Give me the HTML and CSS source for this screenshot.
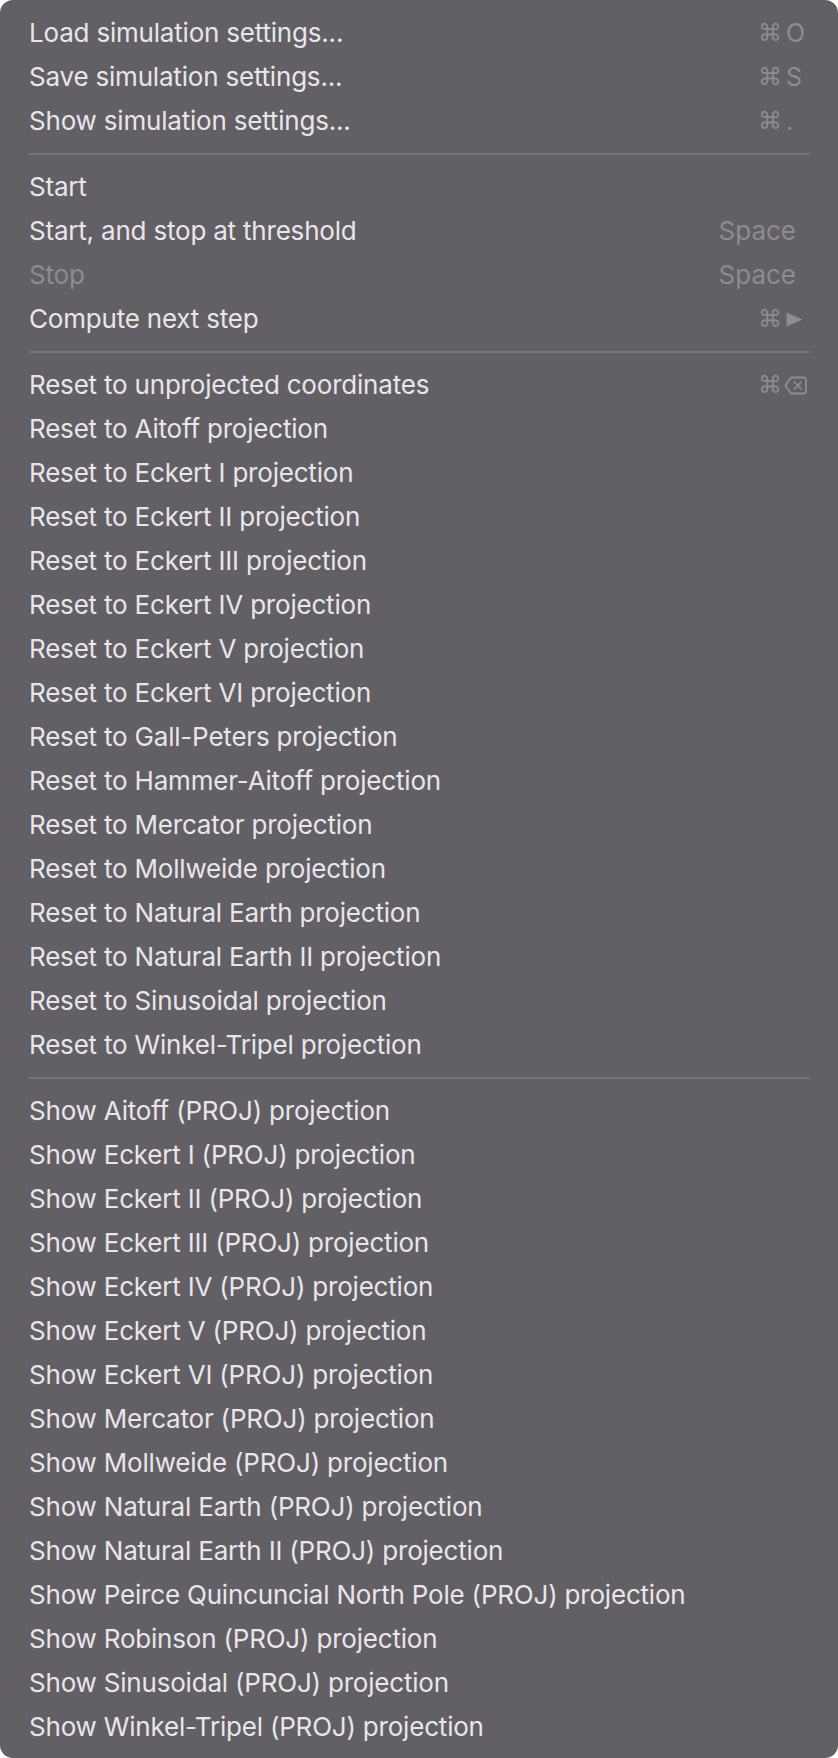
FILE: index.html
```html
<!DOCTYPE html>
<html lang="en">
<head>
<meta charset="utf-8">
<title>Menu</title>
<link rel="stylesheet" href="styles.css">
</head>
<body>
<div class="menu">
  <div class="item"><span class="label">Load simulation settings...</span><span class="combo"><span class="mod">⌘</span><span class="key">O</span></span></div>
  <div class="item"><span class="label">Save simulation settings...</span><span class="combo"><span class="mod">⌘</span><span class="key">S</span></span></div>
  <div class="item"><span class="label">Show simulation settings...</span><span class="combo"><span class="mod">⌘</span><span class="key">.</span></span></div>
  <div class="sep"></div>
  <div class="item"><span class="label">Start</span></div>
  <div class="item"><span class="label">Start, and stop at threshold</span><span class="word">Space</span></div>
  <div class="item disabled"><span class="label">Stop</span><span class="word">Space</span></div>
  <div class="item"><span class="label">Compute next step</span><span class="combo"><span class="mod">⌘</span><span class="key"><svg class="icon-play" width="17" height="15" viewBox="0 0 17 15"><path d="M0.5 0.5 L16.5 7.5 L0.5 14.5 Z" fill="currentColor"/></svg></span></span></div>
  <div class="sep"></div>
  <div class="item"><span class="label">Reset to unprojected coordinates</span><span class="combo"><span class="mod">⌘</span><span class="key"><svg class="icon-del" width="23" height="19" viewBox="0 0 23 19"><path d="M7 1.5 H19.5 A2.5 2.5 0 0 1 22 4 V15 A2.5 2.5 0 0 1 19.5 17.5 H7 L1.3 9.5 Z" fill="none" stroke="currentColor" stroke-width="1.8" stroke-linejoin="round"/><path d="M10.5 6 L17 13 M17 6 L10.5 13" stroke="currentColor" stroke-width="1.8" stroke-linecap="round"/></svg></span></span></div>
  <div class="item"><span class="label">Reset to Aitoff projection</span></div>
  <div class="item"><span class="label">Reset to Eckert I projection</span></div>
  <div class="item"><span class="label">Reset to Eckert II projection</span></div>
  <div class="item"><span class="label">Reset to Eckert III projection</span></div>
  <div class="item"><span class="label">Reset to Eckert IV projection</span></div>
  <div class="item"><span class="label">Reset to Eckert V projection</span></div>
  <div class="item"><span class="label">Reset to Eckert VI projection</span></div>
  <div class="item"><span class="label">Reset to Gall-Peters projection</span></div>
  <div class="item"><span class="label">Reset to Hammer-Aitoff projection</span></div>
  <div class="item"><span class="label">Reset to Mercator projection</span></div>
  <div class="item"><span class="label">Reset to Mollweide projection</span></div>
  <div class="item"><span class="label">Reset to Natural Earth projection</span></div>
  <div class="item"><span class="label">Reset to Natural Earth II projection</span></div>
  <div class="item"><span class="label">Reset to Sinusoidal projection</span></div>
  <div class="item"><span class="label">Reset to Winkel-Tripel projection</span></div>
  <div class="sep"></div>
  <div class="item"><span class="label">Show Aitoff (PROJ) projection</span></div>
  <div class="item"><span class="label">Show Eckert I (PROJ) projection</span></div>
  <div class="item"><span class="label">Show Eckert II (PROJ) projection</span></div>
  <div class="item"><span class="label">Show Eckert III (PROJ) projection</span></div>
  <div class="item"><span class="label">Show Eckert IV (PROJ) projection</span></div>
  <div class="item"><span class="label">Show Eckert V (PROJ) projection</span></div>
  <div class="item"><span class="label">Show Eckert VI (PROJ) projection</span></div>
  <div class="item"><span class="label">Show Mercator (PROJ) projection</span></div>
  <div class="item"><span class="label">Show Mollweide (PROJ) projection</span></div>
  <div class="item"><span class="label">Show Natural Earth (PROJ) projection</span></div>
  <div class="item"><span class="label">Show Natural Earth II (PROJ) projection</span></div>
  <div class="item"><span class="label">Show Peirce Quincuncial North Pole (PROJ) projection</span></div>
  <div class="item"><span class="label">Show Robinson (PROJ) projection</span></div>
  <div class="item"><span class="label">Show Sinusoidal (PROJ) projection</span></div>
  <div class="item"><span class="label">Show Winkel-Tripel (PROJ) projection</span></div>
</div>
</body>
</html>
```

FILE: styles.css
```css
html, body {
  margin: 0;
  padding: 0;
  background: #ffffff;
}

body {
  width: 838px;
  height: 1758px;
  overflow: hidden;
}

.menu {
  box-sizing: border-box;
  width: 838px;
  height: 1758px;
  padding: 11px 0 9px;
  background: #625f65;
  border-radius: 13px;
  font-family: Inter, "Noto Sans", "DejaVu Sans", sans-serif;
  font-size: 26px;
  letter-spacing: -0.2px;
  color: #e8e6ea;
  display: flex;
  flex-direction: column;
}

.item {
  height: 44px;
  line-height: 44px;
  display: flex;
  align-items: center;
  padding: 0 28px 0 29px;
  white-space: nowrap;
}

.item.disabled {
  color: #8e8b91;
}

.label {
  flex: 1;
}

.combo {
  display: flex;
  align-items: center;
  width: 52px;
  color: #8e8b91;
}

.mod {
  width: 21px;
  font-family: "DejaVu Sans", sans-serif;
  font-size: 24px;
  text-align: center;
  margin-right: 7px;
  letter-spacing: 0;
}

.key {
  display: flex;
  align-items: center;
  font-size: 25px;
  letter-spacing: 0;
}

.word {
  color: #8e8b91;
  font-size: 26px;
  letter-spacing: 0;
  padding-right: 14px;
}

.icon-del {
  margin-left: -2px;
}

.sep {
  height: 2px;
  margin: 10px 28px 10px 29px;
  background: #77747a;
}
```
